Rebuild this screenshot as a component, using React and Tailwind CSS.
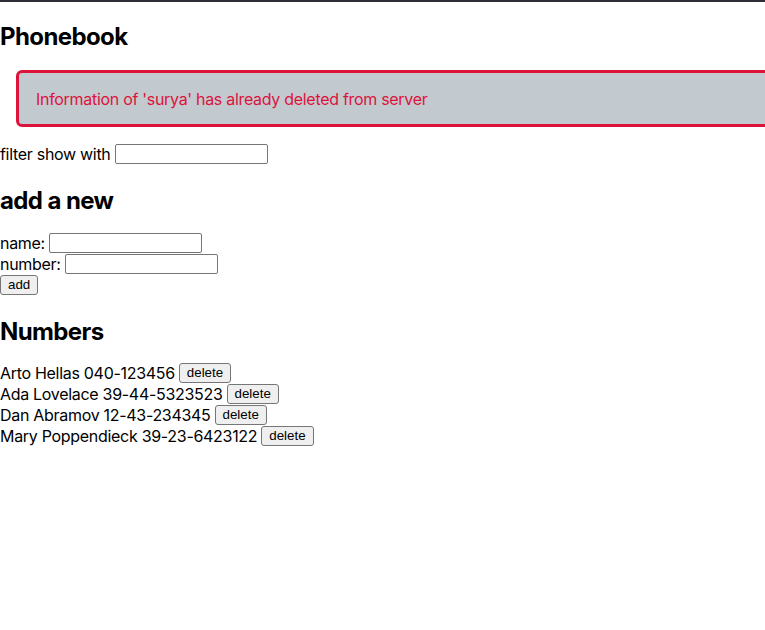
import React, { useState } from 'react';

const initialPersons = [
  { id: 1, name: 'Arto Hellas', number: '040-123456' },
  { id: 2, name: 'Ada Lovelace', number: '39-44-5323523' },
  { id: 3, name: 'Dan Abramov', number: '12-43-234345' },
  { id: 4, name: 'Mary Poppendieck', number: '39-23-6423122' },
];

const inputCls =
  'w-[153px] h-[20px] border border-[#767676] rounded-[2px] bg-white px-[2px] text-[13.33px] outline-none';
const buttonCls =
  "h-[20px] px-[7px] border border-[#767676] rounded-[3px] bg-[#efefef] text-[13.33px] leading-none tracking-normal text-black font-['Liberation_Sans',Arial,sans-serif]";
const h2Cls = 'h-[29px] leading-[29px] text-[24px] font-bold tracking-[-0.6px]';

function App() {
  const [persons] = useState(initialPersons);
  const [filter, setFilter] = useState('');
  const [newName, setNewName] = useState('');
  const [newNumber, setNewNumber] = useState('');

  const shown = persons.filter((p) => p.name.toLowerCase().includes(filter.toLowerCase()));

  return (
    <div className="min-h-[630px] w-[765px] overflow-hidden bg-white text-black text-[16px] tracking-[-0.3px] font-['Inter','Noto_Sans',sans-serif]">
      <div className="h-[2px] bg-[#2e2e38]" />

      <h2 className={`mt-[20px] mb-[19px] ${h2Cls}`}>Phonebook</h2>

      <div className="ml-[16px] w-[800px] h-[57px] border-[3px] border-[#dc143c] rounded-[6px] bg-[#c2c9cf] pl-[17px] flex items-center text-[#dc143c]">
        Information of 'surya' has already deleted from server
      </div>

      <div className="mt-[16px] h-[21px] flex items-center gap-[4px]">
        <span>filter show with</span>
        <input className={inputCls} value={filter} onChange={(e) => setFilter(e.target.value)} />
      </div>

      <h2 className={`mt-[22px] mb-[17px] ${h2Cls}`}>add a new</h2>

      <form onSubmit={(e) => e.preventDefault()}>
        <div className="h-[21px] flex items-center gap-[4px]">
          <span>name:</span>
          <input className={inputCls} value={newName} onChange={(e) => setNewName(e.target.value)} />
        </div>
        <div className="h-[21px] flex items-center gap-[4px]">
          <span>number:</span>
          <input className={inputCls} value={newNumber} onChange={(e) => setNewNumber(e.target.value)} />
        </div>
        <div className="h-[21px] flex items-center">
          <button type="submit" className={buttonCls}>add</button>
        </div>
      </form>

      <h2 className={`mt-[22px] mb-[16px] ${h2Cls}`}>Numbers</h2>

      <div>
        {shown.map((p) => (
          <div key={p.id} className="h-[21px] flex items-center gap-[4px]">
            <span>{p.name} {p.number}</span>
            <button className={buttonCls}>delete</button>
          </div>
        ))}
      </div>
    </div>
  );
}

export default App;
